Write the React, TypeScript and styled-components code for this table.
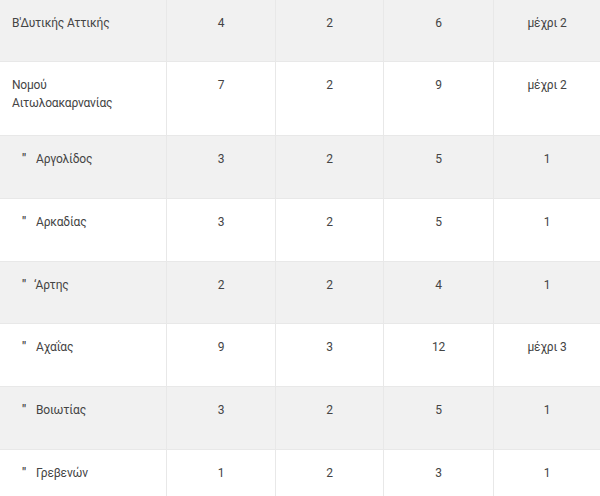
import React from "react";
import styled, { createGlobalStyle } from "styled-components";

const Global = createGlobalStyle`
  html, body { margin: 0; padding: 0; background: #ffffff; }
  body { font-family: Roboto, "Noto Sans", sans-serif; }
`;

const Table = styled.table`
  width: 600px;
  border-collapse: separate;
  border-spacing: 0;
  table-layout: fixed;
  font-size: 12px;
  letter-spacing: -0.2px;
  line-height: 18px;
  color: #444444;
`;

const Row = styled.tr<{ $shade: boolean }>`
  background: ${(p) => (p.$shade ? "#f1f1f1" : "#ffffff")};
`;

const Cell = styled.td<{ $h: number; $first?: boolean }>`
  box-sizing: border-box;
  height: ${(p) => p.$h}px;
  vertical-align: top;
  padding: 14px ${(p) => (p.$first ? "8px" : "6px")} 0 ${(p) => (p.$first ? "12px" : "6px")};
  text-align: ${(p) => (p.$first ? "left" : "center")};
  border-bottom: 1px solid #e8e8e8;
  border-right: 1px solid #e8e8e8;
  &:last-child { border-right: none; }
`;

const Ditto = styled.span<{ $w?: number }>`
  display: inline-block;
  width: ${(p) => p.$w ?? 24}px;
  padding-left: 10px;
  box-sizing: border-box;
  font-size: 13px;
  font-weight: 500;
`;

type R = { name: React.ReactNode; a: string; b: string; c: string; d: string; h: number };

const rows: R[] = [
  { name: "Β'Δυτικής Αττικής", a: "4", b: "2", c: "6", d: "μέχρι 2", h: 62 },
  { name: <>Νομού<br />Αιτωλοακαρνανίας</>, a: "7", b: "2", c: "9", d: "μέχρι 2", h: 74 },
  { name: <><Ditto>"</Ditto>Αργολίδος</>, a: "3", b: "2", c: "5", d: "1", h: 63 },
  { name: <><Ditto>"</Ditto>Αρκαδίας</>, a: "3", b: "2", c: "5", d: "1", h: 63 },
  { name: <><Ditto $w={22}>"</Ditto>‘Αρτης</>, a: "2", b: "2", c: "4", d: "1", h: 62 },
  { name: <><Ditto>"</Ditto>Αχαΐας</>, a: "9", b: "3", c: "12", d: "μέχρι 3", h: 63 },
  { name: <><Ditto>"</Ditto>Βοιωτίας</>, a: "3", b: "2", c: "5", d: "1", h: 63 },
  { name: <><Ditto>"</Ditto>Γρεβενών</>, a: "1", b: "2", c: "3", d: "1", h: 63 },
];

export default function App() {
  return (
    <>
      <Global />
      <Table>
        <colgroup>
          <col style={{ width: 167 }} />
          <col style={{ width: 109 }} />
          <col style={{ width: 108 }} />
          <col style={{ width: 110 }} />
          <col />
        </colgroup>
        <tbody>
          {rows.map((r, i) => (
            <Row key={i} $shade={i % 2 === 0}>
              <Cell $h={r.h} $first>{r.name}</Cell>
              <Cell $h={r.h}>{r.a}</Cell>
              <Cell $h={r.h}>{r.b}</Cell>
              <Cell $h={r.h}>{r.c}</Cell>
              <Cell $h={r.h}>{r.d}</Cell>
            </Row>
          ))}
        </tbody>
      </Table>
    </>
  );
}
